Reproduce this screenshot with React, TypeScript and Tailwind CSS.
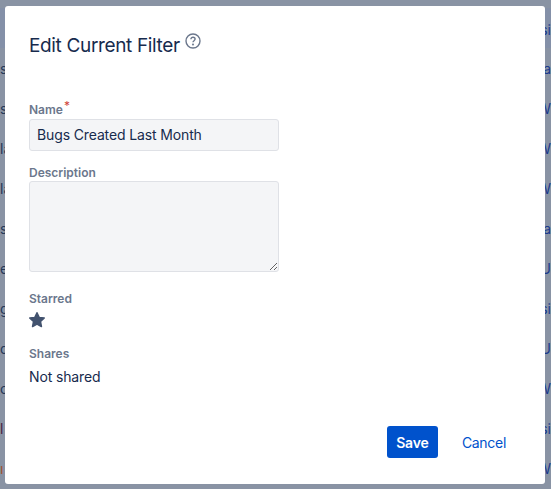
const rows: [string, string, string, string][] = [
  ["s", "#253858", "a", "#1c3a8c"],
  ["se", "#253858", "W", "#1c3a8c"],
  ["la", "#253858", "W", "#1c3a8c"],
  ["la", "#253858", "W", "#1c3a8c"],
  ["s", "#253858", "a", "#1c3a8c"],
  ["e", "#253858", "U", "#1c3a8c"],
  ["g", "#253858", "si", "#1c3a8c"],
  ["d", "#253858", "U", "#1c3a8c"],
  ["o", "#253858", "W", "#1c3a8c"],
  ["l", "#4a1f3f", "si", "#1c3a8c"],
  ["ı", "#a0522d", "W", "#1c3a8c"],
];

function Label({ children }: { children: React.ReactNode }) {
  return <div className="text-[12px] leading-[16px] font-semibold text-[#6b778c]">{children}</div>;
}

export default function App() {
  return (
    <div className="relative h-[489px] w-[551px] overflow-hidden bg-[#8993a4] font-['Inter',sans-serif]">
      <div className="mt-[8px] flex h-[40px] items-center justify-end bg-[#8490a8] pt-[2px] text-[14px]">
        <span className="text-[#1c3a8c]">si</span>
      </div>
      <div className="flex flex-col">
        {rows.map((r, i) => (
          <div key={i} className="flex h-[40px] items-center justify-between text-[14px]">
            <span style={{ color: r[1] }}>{r[0]}</span>
            <span style={{ color: r[3] }}>{r[2]}</span>
          </div>
        ))}
      </div>

      <div className="absolute left-[5px] top-[6px] flex h-[478px] w-[540px] flex-col rounded-[3px] bg-white px-[24px] text-[#172b4d]">
        <div className="mt-[26px] flex items-start">
          <h1 className="text-[19px] leading-[28px] font-normal tracking-[-0.35px]">Edit Current Filter</h1>
          <svg className="ml-[5px] mt-[1px]" width="16" height="16" viewBox="0 0 16 16" fill="none" stroke="#6b778c" strokeWidth="1.4">
            <circle cx="8" cy="8" r="7" />
            <path d="M5.9 6.3C5.9 5 6.9 4.2 8 4.2c1.2 0 2.1.8 2.1 1.9 0 1.6-2.1 1.6-2.1 3.2" />
            <circle cx="8" cy="11.5" r="0.4" fill="#6b778c" />
          </svg>
        </div>

        <div className="mt-[42px] flex items-start">
          <Label>Name</Label>
          <span className="ml-[1px] -mt-[2px] text-[12px] leading-[12px] text-[#d04437]">*</span>
        </div>
        <div className="mt-[1px] flex h-[32px] w-[250px] items-center rounded-[3px] border border-[#dfe1e6] bg-[#f4f5f7] px-[7px] pb-[1px] text-[14px] tracking-[-0.13px] text-[#172b4d]">
          Bugs Created Last Month
        </div>

        <div className="mt-[14px]">
          <Label>Description</Label>
        </div>
        <textarea className="h-[91px] w-[250px] rounded-[3px] border border-[#dfe1e6] bg-[#f4f5f7]" />

        <div className="mt-[19px]">
          <Label>Starred</Label>
        </div>
        <svg className="mt-[5px]" width="16" height="16" viewBox="0.3 0.3 15.4 15.4" fill="#42526e">
          <path d="M8 1l2.1 4.5 4.9.6-3.6 3.4.9 4.8L8 11.9l-4.3 2.4.9-4.8L1 6.1l4.9-.6z" strokeLinejoin="round" stroke="#42526e" strokeWidth="1.4" />
        </svg>

        <div className="mt-[18px]">
          <Label>Shares</Label>
        </div>
        <div className="mt-[5px] text-[14px] leading-[20px] tracking-[-0.13px]">Not shared</div>

        <div className="mt-auto mb-[26px] flex items-center justify-end">
          <button className="h-[32px] w-[51px] rounded-[3px] bg-[#0052cc] text-[14px] font-semibold tracking-[-0.2px] text-white">Save</button>
          <button className="mr-[1px] ml-[24px] h-[32px] pr-[14px] text-[14px] tracking-[-0.3px] text-[#0052cc]">Cancel</button>
        </div>
      </div>
    </div>
  );
}
